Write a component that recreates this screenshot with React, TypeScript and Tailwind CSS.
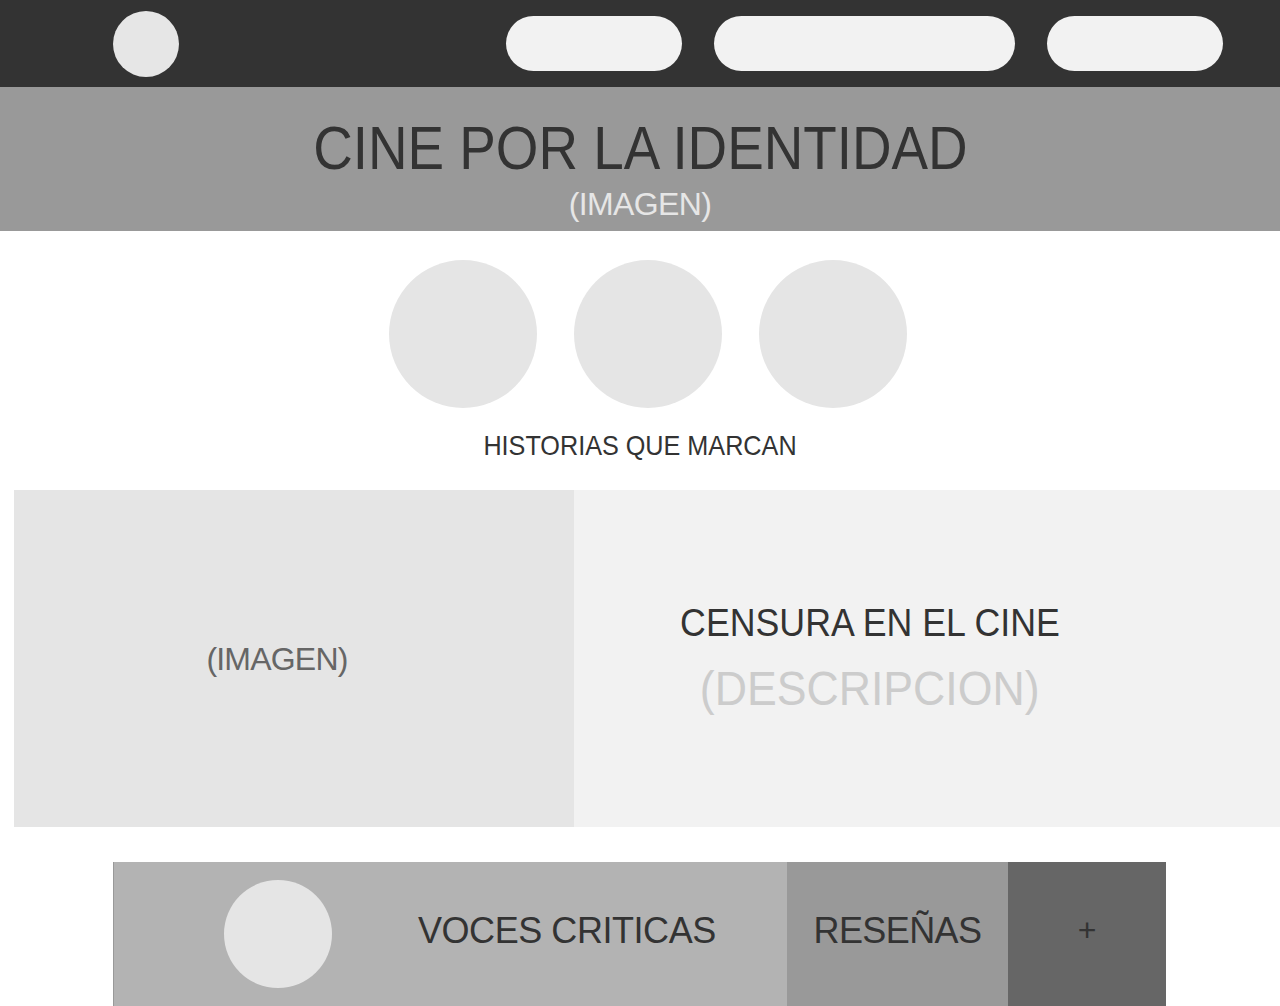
function App() {
  return (
    <div className="w-[1280px] h-[1006px] overflow-hidden bg-white font-['Liberation_Sans',Arial,sans-serif]">
      {/* Barra superior */}
      <div className="flex items-center justify-between h-[87px] bg-[#333333] pl-[113px] pr-[57px]">
        <div className="w-[66px] h-[66px] rounded-full bg-[#e6e6e6]"></div>
        <div className="flex items-center gap-[32px]">
          <div className="w-[176px] h-[55px] rounded-full bg-[#f2f2f2]"></div>
          <div className="w-[301px] h-[55px] rounded-full bg-[#f2f2f2]"></div>
          <div className="w-[176px] h-[55px] rounded-full bg-[#f2f2f2]"></div>
        </div>
      </div>

      {/* Banner */}
      <div className="flex flex-col items-center h-[144px] bg-[#999999] pt-[31px]">
        <div className="text-[61px] leading-[61px] scale-x-[0.898] text-[#333333]">
          CINE POR LA IDENTIDAD
        </div>
        <div className="mt-[9px] text-[32px] leading-[32px] tracking-[-0.6px] text-[#e6e6e6]">
          (IMAGEN)
        </div>
      </div>

      {/* Historias */}
      <div className="flex justify-center gap-[37px] mt-[29px] pl-[15px]">
        <div className="w-[148px] h-[148px] rounded-full bg-[#e5e5e5]"></div>
        <div className="w-[148px] h-[148px] rounded-full bg-[#e5e5e5]"></div>
        <div className="w-[148px] h-[148px] rounded-full bg-[#e5e5e5]"></div>
      </div>
      <div className="mt-[24px] text-center text-[28px] leading-[28px] scale-x-[0.9] text-[#333333]">
        HISTORIAS QUE MARCAN
      </div>

      {/* Destacado */}
      <div className="flex h-[337px] mt-[30px] ml-[14px]">
        <div className="flex items-center justify-center w-[560px] bg-[#e5e5e5] pr-[34px]">
          <div className="text-[32px] leading-[32px] tracking-[-0.8px] text-[#666666]">(IMAGEN)</div>
        </div>
        <div className="flex flex-1 flex-col items-center justify-center bg-[#f2f2f2] pr-[114px]">
          <div className="text-[38px] leading-[38px] scale-x-[0.94] text-[#333333]">CENSURA EN EL CINE</div>
          <div className="mt-[23px] text-[48px] leading-[48px] scale-x-[0.93] text-[#cccccc]">(DESCRIPCION)</div>
        </div>
      </div>

      {/* Voces criticas */}
      <div className="flex h-[144px] mt-[35px] mx-[113px] w-[1053px]">
        <div className="flex items-center w-[674px] bg-[#b3b3b3] border-l border-[#999999] pl-[110px] gap-[86px]">
          <div className="w-[108px] h-[108px] rounded-full bg-[#e5e5e5]"></div>
          <div className="text-[36px] leading-[36px] tracking-[-0.45px] text-[#333333] -mt-[6px]">VOCES CRITICAS</div>
        </div>
        <div className="flex items-center justify-center w-[221px] bg-[#999999]">
          <div className="text-[36px] leading-[36px] tracking-[-0.6px] text-[#333333] -mt-[6px]">RESEÑAS</div>
        </div>
        <div className="flex items-center justify-center flex-1 bg-[#666666]">
          <div className="text-[32px] leading-[32px] text-[#333333] -mt-[8px]">+</div>
        </div>
      </div>
    </div>
  );
}

export default App;
